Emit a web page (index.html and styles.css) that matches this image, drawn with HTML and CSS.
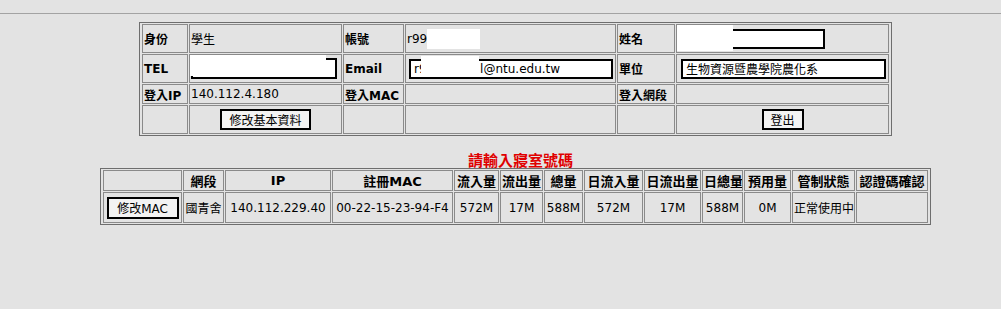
FILE: index.html
```html
<!DOCTYPE html>
<html lang="zh-Hant">
<head>
    <meta charset="UTF-8">
    <title>寢室網路管理</title>
    <link rel="stylesheet" href="styles.css">
</head>
<body>
    <div class="topbar"></div>
    <div class="page">
        <table class="info">
            <tr class="tall">
                <th>身份</th>
                <td>學生</td>
                <th>帳號</th>
                <td>r99<span class="hide-inline"></span></td>
                <th>姓名</th>
                <td><span class="field"><input type="text" class="in-name" value=""><span class="hide hide-name"></span></span></td>
            </tr>
            <tr class="tall">
                <th>TEL</th>
                <td><span class="field"><input type="text" class="in-tel" value=""><span class="hide hide-tel"></span></span></td>
                <th>Email</th>
                <td><span class="field"><input type="text" class="in-mail" value="r9xxxxxxx l@ntu.edu.tw"><span class="hide hide-mail"></span></span></td>
                <th>單位</th>
                <td><input type="text" class="in-unit" value="生物資源暨農學院農化系"></td>
            </tr>
            <tr class="short">
                <th>登入IP</th>
                <td>140.112.4.180</td>
                <th>登入MAC</th>
                <td></td>
                <th>登入網段</th>
                <td></td>
            </tr>
            <tr class="tall">
                <td></td>
                <td class="center"><button class="btn btn-edit">修改基本資料</button></td>
                <td></td>
                <td></td>
                <td></td>
                <td class="center"><button class="btn btn-out">登出</button></td>
            </tr>
        </table>

        <div class="notice">請輸入寢室號碼</div>

        <table class="usage">
            <tr class="head">
                <th></th>
                <th>網段</th>
                <th>IP</th>
                <th>註冊MAC</th>
                <th>流入量</th>
                <th>流出量</th>
                <th>總量</th>
                <th>日流入量</th>
                <th>日流出量</th>
                <th>日總量</th>
                <th>預用量</th>
                <th>管制狀態</th>
                <th>認證碼確認</th>
            </tr>
            <tr class="data">
                <td><button class="btn btn-mac">修改MAC</button></td>
                <td>國青舍</td>
                <td>140.112.229.40</td>
                <td>00-22-15-23-94-F4</td>
                <td>572M</td>
                <td>17M</td>
                <td>588M</td>
                <td>572M</td>
                <td>17M</td>
                <td>588M</td>
                <td>0M</td>
                <td>正常使用中</td>
                <td></td>
            </tr>
        </table>
    </div>
</body>
</html>
```

FILE: styles.css
```css
body {
    margin: 0;
    background-color: #e3e3e3;
    font-family: "DejaVu Sans", "Noto Sans CJK TC", sans-serif;
    font-size: 12px;
    color: #000;
    overflow: hidden;
}
.topbar {
    height: 13px;
    border-bottom: 1px solid #a3a3a3;
}
.page {
    padding-left: 30px;
}
table {
    border-collapse: separate;
    border-spacing: 1px;
    border: 1px solid #6e6e6e;
    padding: 0 1px;
    margin: 0 auto;
    table-layout: fixed;
}
th, td {
    box-sizing: border-box;
    border: 1px solid #8a8a8a;
    padding: 0 1px;
    vertical-align: middle;
    white-space: nowrap;
    overflow: hidden;
}
th {
    font-weight: bold;
    font-size: 13px;
}

/* top info table */
.info {
    width: 752px;
    margin-top: 8px;
}
.info th {
    text-align: left;
    font-size: 12px;
}
.info th:nth-child(1), .info td:nth-child(1) { width: 46px; }
.info td:nth-child(2) { width: 153px; }
.info th:nth-child(3), .info td:nth-child(3) { width: 61px; }
.info td:nth-child(4) { width: 211px; }
.info th:nth-child(5), .info td:nth-child(5) { width: 58px; }
.info td:nth-child(6) { width: 213px; }
.info .tall th, .info .tall td { height: 29px; }
.info .short th, .info .short td { height: 20px; }
.center {
    text-align: center;
}

input {
    box-sizing: border-box;
    height: 20px;
    border: 2px solid #000;
    background: #fff;
    font-family: "DejaVu Sans", "Noto Sans CJK TC", sans-serif;
    font-size: 12px;
    padding: 0 3px;
    margin: 0;
    vertical-align: middle;
}
.in-tel { width: 146px; height: 21px; }
.in-mail { width: 204px; margin-left: 2px; }
.in-name { width: 145px; margin-left: 2px; }
.in-unit { width: 205px; margin-left: 3px; }

/* white patches hiding personal data */
.field {
    position: relative;
    display: inline-block;
    vertical-align: middle;
}
.hide {
    position: absolute;
    background: #fff;
}
.hide-tel { left: -2px; top: -3px; width: 137px; height: 21px; }
.hide-mail { left: 14px; top: -3px; width: 58px; height: 21px; }
.hide-name { left: -1px; top: -4px; width: 56px; height: 26px; }
.hide-inline {
    display: inline-block;
    width: 53px;
    height: 20px;
    background: #fff;
    vertical-align: middle;
}

.btn {
    box-sizing: border-box;
    height: 21px;
    border: 2px solid #000;
    background: #f3f3f3;
    font-family: "DejaVu Sans", "Noto Sans CJK TC", sans-serif;
    font-size: 12px;
    padding: 0;
    vertical-align: middle;
}
.btn-edit { width: 91px; }
.btn-out { width: 42px; }
.btn-mac { width: 72px; height: 22px; }

.notice {
    margin-top: 18px;
    padding-left: 10px;
    height: 14px;
    line-height: 14px;
    text-align: center;
    color: #e00000;
    font-weight: bold;
    font-size: 15px;
}

/* bottom usage table */
.usage {
    width: 831px;
}
.usage th, .usage td {
    text-align: center;
}
.usage .head th { height: 20px; }
.usage .data td { height: 31px; }
.usage tr > :nth-child(1) { width: 79px; }
.usage tr > :nth-child(2) { width: 41px; }
.usage tr > :nth-child(3) { width: 106px; }
.usage tr > :nth-child(4) { width: 121px; }
.usage tr > :nth-child(5) { width: 45px; }
.usage tr > :nth-child(6) { width: 43px; }
.usage tr > :nth-child(7) { width: 39px; }
.usage tr > :nth-child(8) { width: 59px; }
.usage tr > :nth-child(9) { width: 57px; }
.usage tr > :nth-child(10) { width: 41px; }
.usage tr > :nth-child(11) { width: 47px; }
.usage tr > :nth-child(12) { width: 63px; }
.usage tr > :nth-child(13) { width: 72px; }
```
